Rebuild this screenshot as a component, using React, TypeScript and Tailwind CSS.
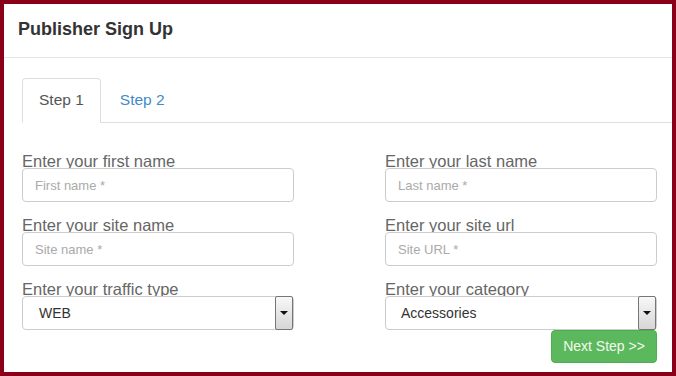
import React from "react";

function Field({ label, placeholder }: { label: string; placeholder: string }) {
  return (
    <div className="flex flex-col">
      <div className="h-4 pt-px text-[16.5px] leading-4 text-[#666] whitespace-nowrap">{label}</div>
      <input
        readOnly
        placeholder={placeholder}
        className="h-[34px] w-full rounded-[4px] border border-[#ccc] bg-white px-[12px] text-[13px] text-[#555] outline-none placeholder:text-[#aaa]"
      />
    </div>
  );
}

function SelectField({ label, value, padLeft }: { label: string; value: string; padLeft: string }) {
  return (
    <div className="flex flex-col">
      <div className="h-4 pt-px text-[16.5px] leading-4 text-[#666] whitespace-nowrap">{label}</div>
      <div className="flex h-[34px] w-full items-stretch rounded-[4px] border border-[#ccc] bg-white">
        <div className={`flex flex-1 items-center text-[14px] text-[#333] ${padLeft}`}>{value}</div>
        <div className="my-[-1px] flex w-[18px] items-center justify-center rounded-[2px] border border-[#767676] bg-linear-to-b from-[#f8f8f8] to-[#d6d6d6]">
          <div className="h-0 w-0 border-x-[4px] border-t-[4px] border-x-transparent border-t-[#111]" />
        </div>
      </div>
    </div>
  );
}

export default function App() {
  return (
    <div
      className="box-border h-[376px] w-[676px] border-4 border-[#8b0019] bg-white"
      style={{ fontFamily: '"Liberation Sans", Arial, sans-serif' }}
    >
      <div className="h-[54px] border-b border-[#e5e5e5] pl-[14px] pt-[15px]">
        <div className="text-[18px] font-bold leading-[20px] text-[#333]">Publisher Sign Up</div>
      </div>

      <div className="ml-[18px] mt-[20px] flex border-b border-[#ddd]">
        <div className="-mb-px rounded-t-[4px] border border-[#ddd] border-b-white bg-white px-4 pb-[12px] pt-[10px] text-[15.5px] leading-[21px] text-[#555]">
          Step 1
        </div>
        <div className="-mb-px ml-[2px] border border-transparent px-4 pb-[12px] pt-[10px] text-[15.5px] leading-[21px] text-[#428bca]">
          Step 2
        </div>
      </div>

      <div className="ml-[18px] mt-[29px] grid grid-cols-[272px_272px] gap-x-[91px] gap-y-[14px]">
        <Field label="Enter your first name" placeholder="First name *" />
        <Field label="Enter your last name" placeholder="Last name *" />
        <Field label="Enter your site name" placeholder="Site name *" />
        <Field label="Enter your site url" placeholder="Site URL *" />
        <SelectField label="Enter your traffic type" value="WEB" padLeft="pl-[16px]" />
        <div className="flex flex-col">
          <SelectField label="Enter your category" value="Accessories" padLeft="pl-[15px]" />
          <div className="flex justify-end">
            <button className="flex h-[33px] w-[106px] items-center justify-center rounded-[4px] border border-[#4cae4c] bg-[#5cb85c] text-[14px] text-[#f2faee]">
              Next Step &gt;&gt;
            </button>
          </div>
        </div>
      </div>
    </div>
  );
}
